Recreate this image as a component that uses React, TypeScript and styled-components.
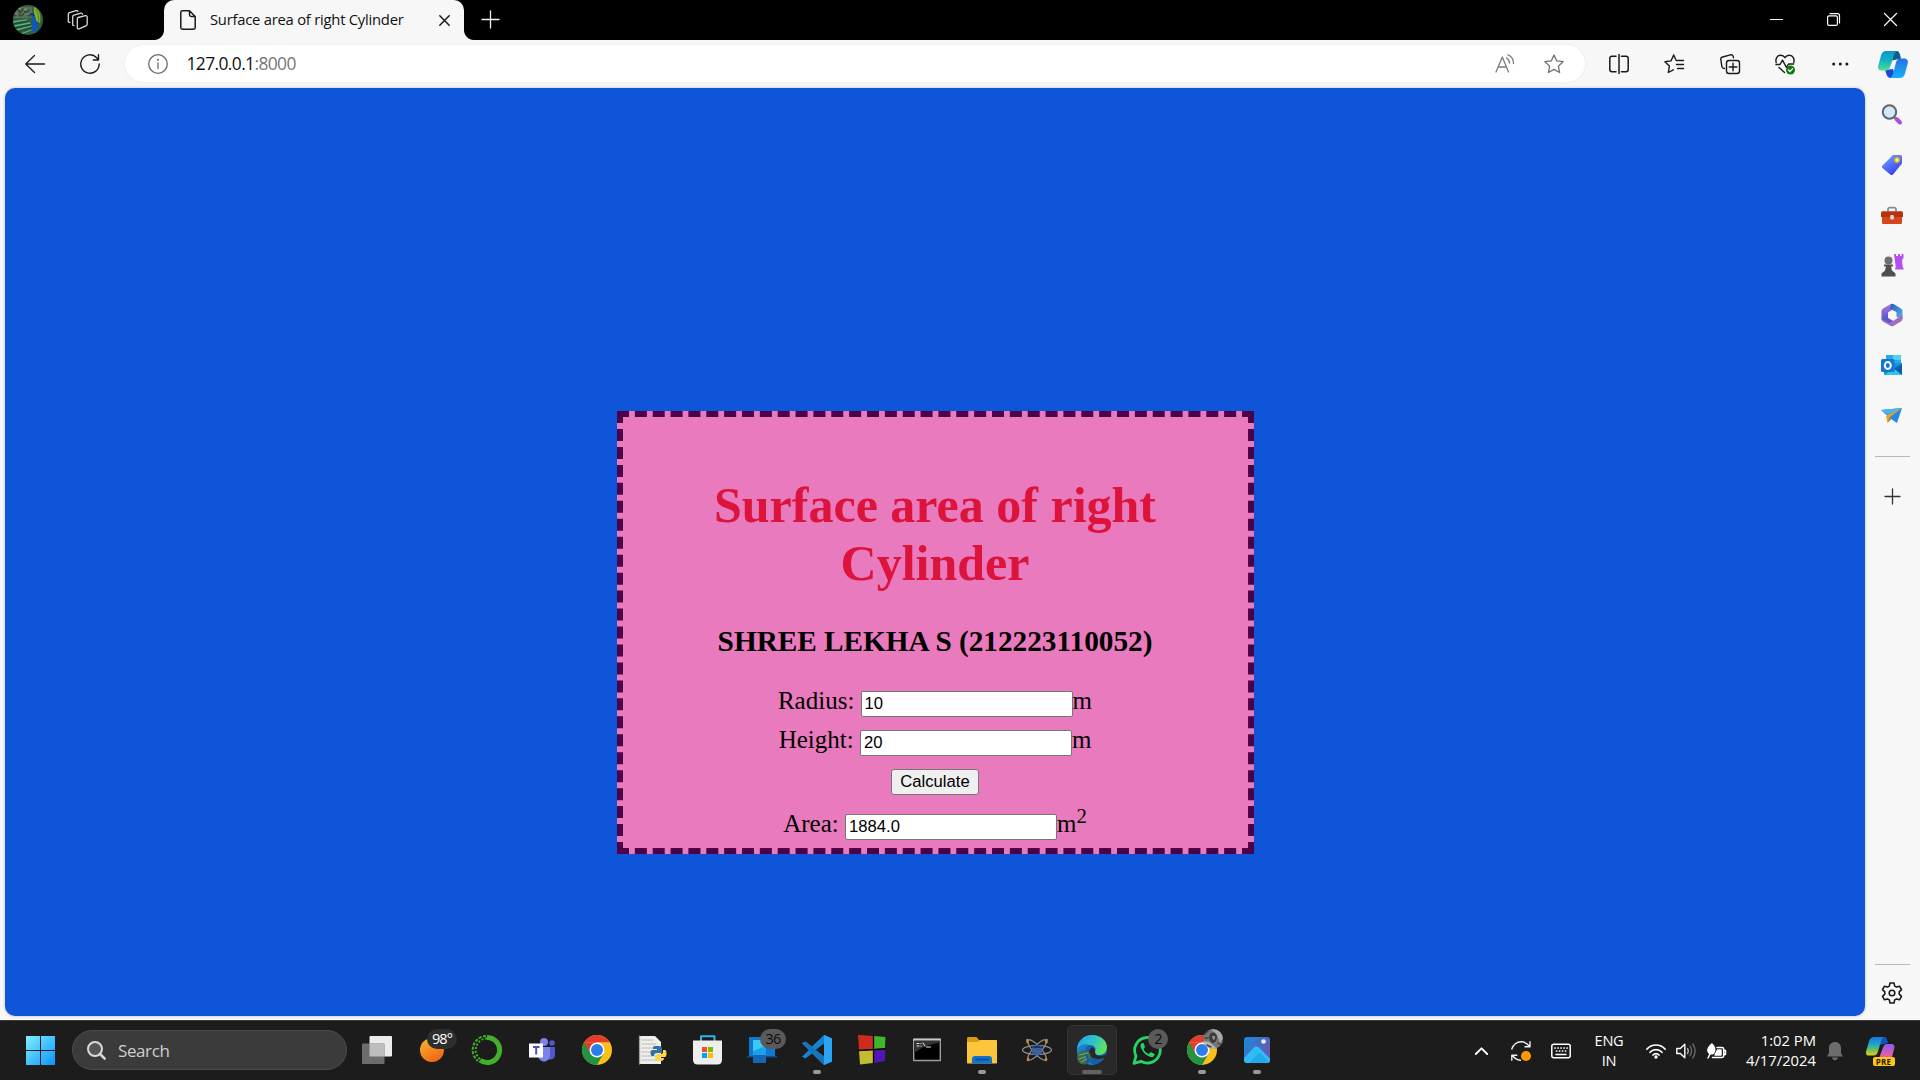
import React from 'react';
import styled, { createGlobalStyle } from 'styled-components';

const UI_FONT = '"Open Sans", "Noto Sans", sans-serif';

const GlobalStyle = createGlobalStyle`
  * { box-sizing: border-box; }
  html, body { margin: 0; padding: 0; overflow: hidden; background: #f7f7f7; }
  svg { display: block; flex: none; overflow: visible; }
`;

/* ---------- shell ---------- */

const Screen = styled.div`
  width: 1920px;
  height: 1080px;
  display: flex;
  flex-direction: column;
  overflow: hidden;
  background: #f7f7f7;
  font-family: ${UI_FONT};
`;

const Cell = styled.div<{ $w: number; $h?: number }>`
  width: ${(p) => p.$w}px;
  height: ${(p) => (p.$h ? `${p.$h}px` : '100%')};
  flex: none;
  display: flex;
  align-items: center;
  justify-content: center;
`;

/* ---------- title bar ---------- */

const TitleBar = styled.div`
  height: 40px;
  flex: none;
  display: flex;
  background: #000;
`;

const TitleLeft = styled.div`
  width: 164px;
  display: flex;
  align-items: center;
`;

const Tab = styled.div`
  position: relative;
  width: 300px;
  height: 40px;
  padding: 0 14px 0 16px;
  display: flex;
  align-items: center;
  background: #f7f7f7;
  border-radius: 10px 10px 0 0;
  &::before,
  &::after {
    content: '';
    position: absolute;
    bottom: 0;
    width: 10px;
    height: 10px;
  }
  &::before {
    left: -10px;
    background: radial-gradient(circle at 0 0, #000 9.5px, #f7f7f7 10.5px);
  }
  &::after {
    right: -10px;
    background: radial-gradient(circle at 100% 0, #000 9.5px, #f7f7f7 10.5px);
  }
`;

const TabTitle = styled.span`
  flex: 1;
  margin-left: 14px;
  padding-bottom: 2px;
  font-size: 14.8px;
  letter-spacing: -0.24px;
  line-height: 20px;
  color: #111;
  white-space: nowrap;
`;

const WindowButtons = styled.div`
  margin-left: auto;
  padding-right: 1px;
  padding-bottom: 1px;
  display: flex;
`;

/* ---------- toolbar ---------- */

const Toolbar = styled.div`
  height: 48px;
  flex: none;
  display: flex;
  padding-left: 7px;
  background: #f7f7f7;
`;

const AddressBar = styled.div`
  width: 1460px;
  height: 37px;
  margin: 5px 6px 0 8px;
  display: flex;
  align-items: center;
  background: #fff;
  border-radius: 19px;
  box-shadow: 0 0 3px rgba(0, 0, 0, 0.07);
`;

const Url = styled.span`
  flex: 1;
  margin-left: -4.5px;
  padding-bottom: 1px;
  font-size: 17.4px;
  letter-spacing: -0.6px;
  color: #111;
  white-space: nowrap;
  span { color: #767676; }
`;

/* ---------- page ---------- */

const Body = styled.div`
  height: 932px;
  flex: none;
  display: flex;
  padding-left: 5px;
`;

const Page = styled.main`
  width: 1860px;
  height: 928px;
  border-radius: 10px;
  background: #0f55d9;
  box-shadow: 0 0 3px rgba(0, 0, 0, 0.25);
`;

const Card = styled.section`
  width: 637px;
  height: 443px;
  margin: 323px 0 0 612px;
  padding: 25px 1px 0 0;
  border: 6px dashed #4b0049;
  background: #e97abd;
  font-family: "Liberation Serif", "Times New Roman", serif;
  font-size: 25px;
  text-align: center;
  color: #000;
`;

const Heading = styled.h1`
  margin: 34px 0 0;
  font-size: 50px;
  line-height: 58px;
  color: #dc143c;
`;

const Student = styled.h3`
  margin: 33px 0 23px;
  font-size: 29.25px;
  line-height: 33px;
`;

const Row = styled.div<{ $top?: number }>`
  height: 39px;
  margin-top: ${(p) => p.$top ?? 0}px;
  line-height: 39px;
  white-space: nowrap;
`;

const Field = styled.input`
  width: 212px;
  height: 26px;
  padding: 1px 3px;
  border: 1px solid #767676;
  border-radius: 2px;
  background: #fff;
  color: #000;
  font: 16.67px "Liberation Sans", Arial, sans-serif;
`;

const Submit = styled.button`
  width: 88px;
  height: 26px;
  padding: 0;
  border: 1px solid #767676;
  border-radius: 3px;
  background: #efefef;
  color: #000;
  font: 16.67px "Liberation Sans", Arial, sans-serif;
`;

const Power = styled.sup`
  font-size: 20.8px;
  line-height: 0;
  vertical-align: 9px;
`;

/* ---------- edge sidebar ---------- */

const Sidebar = styled.aside`
  width: 55px;
  height: 932px;
  padding-top: 2px;
  display: flex;
  flex-direction: column;
`;

const SideCell = styled(Cell)`
  padding-right: 1px;
`;

const Rule = styled.div`
  width: 35px;
  height: 1px;
  margin: 0 10px;
  background: #b9b9b9;
`;

const Push = styled.div`
  flex: 1;
`;

/* ---------- taskbar ---------- */

const Taskbar = styled.footer`
  height: 60px;
  flex: none;
  display: flex;
  align-items: stretch;
  background: #1c1c1c;
  border-top: 1px solid #3a3a3a;
  color: #fff;
`;

const StartButton = styled.div`
  width: 72px;
  padding-left: 26px;
  flex: none;
  display: flex;
  align-items: center;
`;

const SearchBox = styled.div`
  width: 275px;
  height: 40px;
  margin: 9px 2.5px 0 0;
  padding-left: 14px;
  flex: none;
  display: flex;
  align-items: center;
  gap: 12px;
  border: 1px solid #4c4c4c;
  border-radius: 20px;
  background: #3b3b3b;
  color: #cfcfcf;
  font-size: 17px;
  letter-spacing: -0.4px;
`;

const AppCell = styled.div<{ $active?: boolean }>`
  position: relative;
  width: 50px;
  height: 50px;
  margin: 4px 2.5px 0;
  flex: none;
  display: flex;
  align-items: center;
  justify-content: center;
  border-radius: 5px;
  background: ${(p) => (p.$active ? '#292929' : 'transparent')};
  border: 1px solid ${(p) => (p.$active ? '#333' : 'transparent')};
`;

const Indicator = styled.i<{ $w: number }>`
  position: absolute;
  bottom: 0;
  left: calc(50% - ${(p) => p.$w / 2}px);
  width: ${(p) => p.$w}px;
  height: 4px;
  border-radius: 2px;
  background: ${(p) => (p.$w > 10 ? '#626262' : '#9a9a9a')};
`;

const Badge = styled.span<{ $w: number; $dark?: boolean }>`
  position: absolute;
  top: 3px;
  left: ${(p) => (p.$dark ? 19 : 35 - p.$w / 2)}px;
  width: ${(p) => p.$w}px;
  height: 20px;
  border-radius: 10px;
  background: ${(p) => (p.$dark ? '#2e2e2e' : '#5a5a5a')};
  color: ${(p) => (p.$dark ? '#fff' : '#0c0c0c')};
  font-size: 14.5px;
  line-height: 20px;
  letter-spacing: -0.9px;
  text-align: center;
`;

const PhotoBadge = styled.span`
  position: absolute;
  top: 3px;
  left: 25px;
`;

const Tray = styled.div`
  margin-left: auto;
  padding-right: 12px;
  display: flex;
`;

const TrayText = styled.div<{ $w: number; $right?: boolean }>`
  width: ${(p) => p.$w}px;
  height: 40px;
  margin-top: 9px;
  font-size: ${(p) => (p.$right ? 14.8 : 14.6)}px;
  line-height: 20px;
  letter-spacing: ${(p) => (p.$right ? 0 : -0.3)}px;
  text-align: ${(p) => (p.$right ? 'right' : 'center')};
  white-space: nowrap;
`;

/* ---------- icon frame ---------- */

type IconProps = {
  w?: number;
  h?: number;
  c?: string;
  s?: number;
  children: React.ReactNode;
};

const Icon = ({ w = 20, h = w, c = 'none', s = 1.3, children }: IconProps) => (
  <svg
    width={w}
    height={h}
    viewBox={`0 0 ${w} ${h}`}
    fill="none"
    stroke={c}
    strokeWidth={s}
    strokeLinecap="round"
    strokeLinejoin="round"
  >
    {children}
  </svg>
);

const STAR = 'M10 1l2.700 5.900 6.400.800-4.700 4.400 1.200 6.400L10 15.400l-5.600 3.100 1.200-6.400L.9 7.700l6.400-.8z';

const Avatar = () => (
  <Icon w={30}>
    <defs>
      <clipPath id="avatarClip"><circle cx="15" cy="15" r="15" /></clipPath>
    </defs>
    <g clipPath="url(#avatarClip)">
      <path d="M0 0h30v30H0z" fill="#2f6141" />
      <path d="M0 2h19v11H0z" fill="#5d6f58" />
      <path d="M2 6l3-2 2 4 3-4 3 4 3-3M1 11l4-2 3 2 4-3 4 3" stroke="#2f4733" strokeWidth="1.500" />
      <path d="M5 3l2 1M11 5l2-1M3 9h2M12 9h3" stroke="#9aa48d" strokeWidth="1.200" />
      <path d="M0 17l14-2M1 21l16-3M3 25l15-4M8 29l10-4" stroke="#5fae7c" strokeWidth="1.300" />
      <path d="M0 19l15-3M2 23l15-3M5 27l13-4" stroke="#1d4a33" strokeWidth="1.300" />
      <path d="M21 2c5 1 7.500 8 6 16l-4-2c0-5-3-8-2-14z" fill="#86ab2f" />
      <path d="M23 4c2 3 3 7 2.500 12" stroke="#5a8a2b" strokeWidth="1.200" />
      <path d="M17 10c1-2 4-2 4.500 1 .5 4 3.500 5 3.500 10 0 4-2.500 7-5 6-3-2 .5-8-1.500-15z" fill="#1257b5" />
      <path d="M17 10c.5-1.500 3-1.500 3.500.5" stroke="#0b2f6b" strokeWidth="1.200" />
    </g>
  </Icon>
);

const EdgeCopilot = () => (
  <Icon w={30} h={27}>
    <defs>
      <linearGradient id="cpA" x1="0" y1="0" x2="0" y2="1">
        <stop offset="0" stopColor="#0f93cf" /><stop offset=".5" stopColor="#12b3bf" /><stop offset="1" stopColor="#54dc93" />
      </linearGradient>
      <linearGradient id="cpB" x1="0" y1="0" x2="0" y2="1">
        <stop offset="0" stopColor="#2a6fe0" /><stop offset="1" stopColor="#14b4fb" />
      </linearGradient>
    </defs>
    <path d="M15 0h3.500c2.500 0 3 2 3.600 4l1 3.500-9 2z" fill="#0c5f8c" />
    <path d="M7 19l8-1 3 9h-5c-3 0-4-2-4.600-4z" fill="#1e49d8" />
    <path d="M8 0h11c-2 1-3 3-3.700 6l-2.800 9c-.8 3-2.500 4.500-5 4.500H3.500C.8 19.500-.4 17.500.3 14.500L3 4.500C3.800 1.500 5.500 0 8 0z" fill="url(#cpA)" />
    <path d="M22.500 7.500H26c3 0 4.500 2 3.700 5L27 22.500c-.8 3-2.500 4.500-5 4.500H12c2-1 2.700-3 3.500-6l2.300-9c.8-3 2.200-4.500 4.700-4.500z" fill="url(#cpB)" />
  </Icon>
);

const Chrome = () => (
  <Icon w={30}>
    <circle cx="15" cy="15" r="15" fill="#fbc116" />
    <path d="M2 7.500A15 15 0 0 1 28 7.500H15z" fill="#e33b2e" />
    <path d="M2 7.500A15 15 0 0 0 15 30l6.500-11.300L15 15z" fill="#229342" />
    <path d="M2 7.500L8.500 18.700 15 7.500z" fill="#e33b2e" />
    <path d="M15 7.500h13L21.500 18.700z" fill="#fbc116" />
    <circle cx="15" cy="15" r="7.500" fill="#fff" />
    <circle cx="15" cy="15" r="6" fill="#2b7de9" />
  </Icon>
);

/* ---------- sidebar artwork ---------- */

const sideIcons: React.ReactNode[] = [
  <Icon w={22} key="search">
    <path d="M12.500 12.500l3 3" stroke="#6b6b6b" strokeWidth="2" />
    <path d="M15.500 15l3.500 3.500" stroke="#b24be0" strokeWidth="4" />
    <circle cx="8.500" cy="8" r="6.700" fill="#cfe9fb" stroke="#656565" strokeWidth="2" />
  </Icon>,
  <Icon w={22} key="tag">
    <defs><linearGradient id="tg" x1="0" y1="0" x2=".6" y2="1"><stop stopColor="#6db0ff" /><stop offset="1" stopColor="#3d3cf0" /></linearGradient></defs>
    <path d="M12 1h7c1.300 0 2 .7 2 2v6.500L12 20.500c-.8.8-2 .8-2.800 0L1.500 14c-.8-.8-.8-1.800 0-2.600z" fill="url(#tg)" />
    <circle cx="16" cy="6" r="2.200" fill="#fff3b8" stroke="#e3b912" strokeWidth="1.500" />
  </Icon>,
  <Icon w={22} key="toolbox">
    <path d="M7 7V5.500C7 4 8 3.700 9 3.700h4c1 0 2 .3 2 1.800V7" stroke="#8b8b8b" strokeWidth="1.700" />
    <path d="M1 12h20v6.500c0 1-.6 1.500-1.500 1.500h-17c-.9 0-1.500-.5-1.500-1.500z" fill="#d4461c" />
    <path d="M0 9c0-1 .6-1.700 1.500-1.700h19c.9 0 1.500.7 1.500 1.700v4H0z" fill="#b5340f" />
    <rect x="9.300" y="11" width="3.600" height="4.500" rx="1" fill="#d8d8d8" />
  </Icon>,
  <Icon w={22} key="games">
    <path d="M13 0h2v2h2V0h2v2h1.500V0h2v4l-1.500 2 .7 7 1.300 2.500h-9l.7-3z" fill="#b350ef" />
    <circle cx="7.500" cy="6.500" r="4" fill="#6f6f6f" />
    <path d="M3 10.500h9v2H10l1 4 3.500 3v3H.5v-3l3.500-3 1-4H3z" fill="#4f4f4f" />
  </Icon>,
  <Icon w={22} key="m365">
    <defs>
      <linearGradient id="ma" x1="0" y1="0" x2="0" y2="1"><stop stopColor="#a774dc" /><stop offset="1" stopColor="#5b58c8" /></linearGradient>
      <linearGradient id="mb" x1="0" y1="0" x2="1" y2="1"><stop stopColor="#2b55b8" /><stop offset="1" stopColor="#54b7ef" /></linearGradient>
    </defs>
    <path d="M10 0L2.500 4.300C1 5.200.5 6 .5 7.700v7.600l6.500 2V9l5-4V.5C11.500 0 10.800-.3 10 0z" fill="url(#ma)" />
    <path d="M10 0c1-.4 2-.2 3 .3l6.500 4c1.300.8 2 1.700 2 3.200V15l-6-2V8L9 5z" fill="url(#mb)" />
    <path d="M.5 15c0 1.400.6 2 1.800 2.700l7 4c1.200.7 2.200.7 3.400 0l6.800-4c1.400-.8 2-1.700 2-3.200l-.2-3.500L12 17l-5-3z" fill="#a06cc4" />
    <path d="M.5 15L7 9v5l5 3-4 2z" fill="#605ad0" />
    <path d="M11 6.500l4 2v4.700l-4 2.500-4-2.500V8.500z" fill="#f7f7f7" />
  </Icon>,
  <Icon w={22} key="outlook">
    <path d="M5 1h15v8H5z" fill="#28a8ea" /><path d="M12 1h8v5h-8z" fill="#50d0f5" />
    <path d="M3 9h18v12H4.500C3.500 21 3 20.500 3 19.500z" fill="#1490df" />
    <path d="M21 10v11l-9-6z" fill="#0a5ea8" /><path d="M4 21l8-7 9 7z" fill="#37c3ee" />
    <rect x="0" y="5" width="13.500" height="13" rx="1.500" fill="#0f78d4" />
    <ellipse cx="6.800" cy="11.500" rx="3" ry="3.400" stroke="#fff" strokeWidth="2" />
  </Icon>,
  <Icon w={22} key="drop">
    <path d="M0 6L21 4l-5 15-6-4z" fill="#2687e8" />
    <path d="M0 6L21 4 7 11z" fill="#46b5f4" />
    <path d="M21 4L5 12l1.500 7L9 13z" fill="#f0a21b" />
    <path d="M6.500 19l3.500-4-1.500-1.500z" fill="#9a6a19" />
  </Icon>,
];

/* ---------- taskbar artwork ---------- */

const TaskView = () => (
  <Icon w={30} h={28}>
    <rect x="7.500" y="0" width="22.500" height="20.500" rx="1" fill="#ececec" />
    <rect x="0" y="7.500" width="22.500" height="20.500" rx="1" fill="#6c6c6c" />
    <path d="M7.500 7.500h15v13h-15z" fill="#bdbdbd" />
  </Icon>
);

const Weather = () => (
  <Icon w={24}>
    <defs><linearGradient id="sun" x1="0" y1="0" x2=".7" y2="1"><stop stopColor="#f6b62e" /><stop offset="1" stopColor="#f26414" /></linearGradient></defs>
    <circle cx="12" cy="12" r="12" fill="url(#sun)" />
  </Icon>
);

const Anaconda = () => (
  <Icon w={30}>
    <path d="M15 2.500a12.500 12.500 0 1 1-7 22.800" stroke="#43b02a" strokeWidth="5" strokeLinecap="butt" />
    <path d="M15 3.500A11.500 11.500 0 0 0 8 24" stroke="#43b02a" strokeWidth="2" strokeLinecap="butt" strokeDasharray="2 1.700" />
    <path d="M14 1A14 14 0 0 0 6 26" stroke="#43b02a" strokeWidth="2" strokeLinecap="butt" strokeDasharray="3 1.500" />
  </Icon>
);

const Teams = () => (
  <Icon w={27} h={24}>
    <circle cx="15" cy="4" r="4" fill="#7b83eb" /><circle cx="23" cy="5" r="2.800" fill="#5059c9" />
    <path d="M17 9h9v8c0 3-2 4.500-5 4.500h-4z" fill="#5059c9" />
    <path d="M9 9h12v8c0 4-3 6.500-6 6.500S9 21 9 17z" fill="#7b83eb" />
    <rect x="0" y="5.500" width="14" height="14" fill="#fff" />
    <path d="M4 9h6.500M7.200 9v7.500" stroke="#4b53bc" strokeWidth="2" strokeLinecap="butt" />
  </Icon>
);

const PythonDoc = () => (
  <Icon w={29} h={30}>
    <path d="M1 1h16l6 6v22H1z" fill="#eeeeea" />
    <path d="M4 5h12M4 9h15M4 13h13M4 17h12M4 21h13M4 25h14" stroke="#b6b6b2" strokeWidth="1" strokeDasharray="2 1" />
    <path d="M1.500 1v28" stroke="#888" strokeWidth="1.500" strokeDasharray="1 2" />
    <path d="M17 11h4c2 0 3 1 3 3v4h-5c-2 0-3 1-3 3h-2c-2 0-2-6 0-6h5v-1h-4c0-2 0-3 2-3z" fill="#33709f" />
    <path d="M25 15h2c2 0 2 7 0 7h-5v1h4c0 2-1 3-3 3h-3c-2 0-3-1-3-3s1-4 3-4h3c2 0 2-2 2-4z" fill="#ffd445" />
  </Icon>
);

const Store = () => (
  <Icon w={29} h={30}>
    <path d="M8 6V1.200h13.500V6" stroke="#29b5f0" strokeWidth="2" />
    <path d="M0 5.500h29V25c0 3-2 4.500-4.500 4.500h-20C2 29.500 0 28 0 25z" fill="#eeeeee" />
    <path d="M9 12h5v5H9z" fill="#f25022" /><path d="M15 12h5v5h-5z" fill="#7fba00" />
    <path d="M9 18h5v5H9z" fill="#00a4ef" /><path d="M15 18h5v5h-5z" fill="#ffb900" />
  </Icon>
);

const PhoneLink = () => (
  <Icon w={30} h={28}>
    <path d="M2 1h26v19H2z" fill="#0f78d0" /><path d="M0 20h30v1.500H0z" fill="#0a4f8f" />
    <path d="M6 4h13v22H6z" fill="#1f9fe6" /><path d="M6 19h13v8H6z" fill="#1567b2" />
    <path d="M6 4h13v6l-13 5z" fill="#39c8f8" />
  </Icon>
);

const VSCode = () => (
  <Icon w={30}>
    <path d="M22 0l8 3.500v23L22 30 10 18.500l-6.500 5L0 21.800l7-6.800-7-6.800 3.500-1.700 6.500 5z" fill="#1583cf" />
    <path d="M22 0l8 3.500v23L22 30z" fill="#29a5f2" />
    <path d="M22 8.500L13.500 15l8.500 6.500z" fill="#1c1c1c" />
    <path d="M0 8.200l3.500-1.700L22 21.500V30z" fill="#1a72ba" />
  </Icon>
);

const Blocks = () => (
  <Icon w={28} h={30}>
    <path d="M0 0l15 1v13L1 15z" fill="#cf2a1e" /><path d="M16 1l11.500 1-.5 11-11 1z" fill="#3fb52c" />
    <path d="M1 16l14-1v13L2 29.500z" fill="#c1bd2d" /><path d="M16 15l11-1v12l-11 2z" fill="#5216b6" />
    <path d="M15.500 0v29M0 15.500l27-1.500" stroke="#0b0b0b" />
  </Icon>
);

const Cmd = () => (
  <Icon w={28} h={24}>
    <path d="M.7 1.500h26.600v21H.7z" fill="#000" stroke="#9d9da5" strokeWidth="1.400" />
    <path d="M1 3h26v2C14 6 7 11 1 15z" fill="#333" /><path d="M1 1.500h26" stroke="#c7c7cd" strokeWidth="2" />
    <path d="M4 5.500h2M4 8h2M8 5.500v.2M8 8v.2M10 5l2 3M13.500 9h4" stroke="#eee" strokeWidth="1" />
  </Icon>
);

const Explorer = () => (
  <Icon w={30} h={27}>
    <path d="M0 1.500C0 .6.6 0 1.500 0h8l3 3.500H28V15H0z" fill="#d99a0b" />
    <path d="M0 5h10l3-2h16c.7 0 1 .3 1 1v21.500c0 .7-.3 1-1 1H1c-.7 0-1-.3-1-1z" fill="#fbc63b" />
    <path d="M5 26.500V22c0-2 1-3 3-3h14c2 0 3 1 3 3v4.500z" fill="#1273c8" />
    <path d="M9 22.500h12" stroke="#0a4a8f" strokeWidth="1.500" />
  </Icon>
);

const Atom = () => (
  <Icon w={30} h={24}>
    <g stroke="#929292" strokeWidth="1.200">
      <ellipse cx="15" cy="12" rx="14.500" ry="4.500" />
      <ellipse cx="15" cy="12" rx="13" ry="4" transform="rotate(48 15 12)" />
      <ellipse cx="15" cy="12" rx="13" ry="4" transform="rotate(-48 15 12)" />
    </g>
    <circle cx="15" cy="12" r="5.500" fill="#3c5f9f" />
    <path d="M10 10c2-3 8-3 10 0" fill="#22324f" />
    <path d="M5.500 2v2M24.500 2v2M6 21v1M24 21v1" stroke="#c68d3a" strokeWidth="2.500" />
  </Icon>
);

const Edge = () => (
  <Icon w={30}>
    <defs>
      <linearGradient id="ed" x1="0" y1="0" x2="1" y2=".3"><stop stopColor="#1fa2e8" /><stop offset=".6" stopColor="#2fc3c8" /><stop offset="1" stopColor="#5fe060" /></linearGradient>
    </defs>
    <circle cx="15" cy="15" r="15" fill="#1260ad" />
    <path d="M0 15C0 6 7 0 15 0c9 0 15 6 15 12 0 5-3.500 8-8 8-4 0-5-2-4-3.500 2-3-1-6.500-5-6.500C7 10 2 13 0 18z" fill="url(#ed)" />
    <path d="M0 15c2-5 8-7 12-5-5 2-5 10-2 14 2 3 5 5 8 5.700C8 31 0 24 0 15z" fill="#1b7fd0" />
    <path d="M18 17c0 2 2 4 5 4 3 0 5-1 6.500-2l2 1-2.500 4c-2-2-4 0-7 0-5 0-10-2-10-7 0-2 2-5 4-4.500 2 1 2 3.500 2 4.500z" fill="#292929" />
    <circle cx="7" cy="22.500" r="7" fill="#3d6b45" />
    <path d="M2 20l9-2M2 24l9-3M4 27l8-4" stroke="#79a882" strokeWidth="1" />
    <path d="M9 20c2 2 3 5 1 8" stroke="#1257b5" strokeWidth="2" />
  </Icon>
);

const WhatsApp = () => (
  <Icon w={30}>
    <path d="M2 28.300l2-7.300A12.800 12.800 0 1 1 9 26.300z" stroke="#25d366" strokeWidth="2.800" />
    <path d="M10 8c-1.500 1-2 3-1 5 2 4.500 5 7.500 9.500 9 2.500.6 4-.8 4.200-3l-4-2-2 2c-2.500-1-4.300-3-5.200-5l1.600-2-1.600-4z" fill="#25d366" />
  </Icon>
);

const Photos = () => (
  <Icon w={26}>
    <defs><linearGradient id="ph" x1="0" y1="0" x2="1" y2=".6"><stop stopColor="#158bdd" /><stop offset="1" stopColor="#6a58ad" /></linearGradient></defs>
    <rect width="26" height="26" rx="3" fill="url(#ph)" />
    <path d="M0 21l10-10.500c1.500-1.500 3.500-1.500 5 0L26 21.500V23c0 2-1 3-3 3H3c-2 0-3-1-3-3z" fill="#2ebcf5" />
    <path d="M14 17c1-1 2-1 3 0l8 8-2 1H5z" fill="#1593df" opacity=".45" />
    <circle cx="19.500" cy="4.500" r="2.300" fill="#e8f0ff" />
  </Icon>
);

const ProfilePhoto = () => (
  <PhotoBadge>
    <Icon w={20}>
      <defs><clipPath id="pp"><circle cx="10" cy="10" r="10" /></clipPath></defs>
      <g clipPath="url(#pp)">
        <path d="M0 0h20v20H0z" fill="#777" />
        <path d="M8 0l12 1v8l-3 5-3-8z" fill="#a8a8a8" />
        <path d="M0 12l6 1 5 4 3 3H0z" fill="#b8b8b8" />
        <path d="M7 5c3-3 7-1 7 3 0 3-2 6-4 6-3 0-5-6-3-9z" fill="#3c3c3c" />
        <path d="M9 7h3v3l-2 1z" fill="#8f8f8f" />
        <path d="M2 5l3-3M2 9h3M15 14l3 2M4 16l4 2" stroke="#444" strokeWidth="1.500" />
      </g>
    </Icon>
  </PhotoBadge>
);

type AppEntry = { name: string; art: React.ReactNode; run?: number; active?: boolean; extra?: React.ReactNode };

const apps: AppEntry[] = [
  { name: 'task-view', art: <TaskView /> },
  { name: 'weather', art: <Weather />, extra: <Badge $w={30} $dark>98°</Badge> },
  { name: 'anaconda', art: <Anaconda /> },
  { name: 'teams', art: <Teams /> },
  { name: 'chrome', art: <Chrome /> },
  { name: 'python', art: <PythonDoc /> },
  { name: 'store', art: <Store /> },
  { name: 'phone', art: <PhoneLink />, extra: <Badge $w={26}>36</Badge> },
  { name: 'code', art: <VSCode />, run: 8 },
  { name: 'blocks', art: <Blocks /> },
  { name: 'cmd', art: <Cmd /> },
  { name: 'explorer', art: <Explorer />, run: 8 },
  { name: 'atom', art: <Atom /> },
  { name: 'edge', art: <Edge />, run: 20, active: true },
  { name: 'whatsapp', art: <WhatsApp />, extra: <Badge $w={20}>2</Badge> },
  { name: 'chrome-profile', art: <Chrome />, run: 8, extra: <ProfilePhoto /> },
  { name: 'photos', art: <Photos />, run: 8 },
];

const PreLabel = styled.span`
  position: absolute;
  left: 7px;
  bottom: 0;
  width: 22px;
  height: 9px;
  border-radius: 2px;
  background: #ffc90e;
  color: #1c1c1c;
  font-size: 8px;
  font-weight: 700;
  line-height: 9px;
  letter-spacing: 0.2px;
  text-align: center;
`;

const PreWrap = styled.div`
  position: relative;
  width: 29px;
  height: 29px;
  margin-right: 2px;
  margin-top: 2px;
`;

const K = '#1a1a1a';

export default function App() {
  return (
    <Screen>
      <GlobalStyle />
      <TitleBar>
        <TitleLeft>
          <Cell $w={56}><Avatar /></Cell>
          <Cell $w={43}>
            <Icon w={21} c="#d8d8d8" s={1.3}>
              <path d="M11 7.500l7.500-1.800c1-.2 1.700.3 1.700 1.300v7c0 .9-.5 1.500-1.300 1.800L12 18.800c-1 .3-1.700-.2-1.700-1.200V9c0-.8.2-1.300.7-1.500z" />
              <path d="M7 15.500l-1.300-.4V6.800c0-.8.4-1.300 1.200-1.600l7-2c.9-.2 1.500.2 1.700 1" />
              <path d="M3 12.500l-1.700-.6V4.200c0-.8.4-1.300 1.200-1.600l6.500-2c.9-.2 1.600.1 1.900.9" />
            </Icon>
          </Cell>
        </TitleLeft>
        <Tab>
          <Icon w={16} h={20} c={K} s={1.5}>
            <path d="M9.500.8H2.500C1.500.8.8 1.500.8 2.500v15c0 1 .7 1.700 1.700 1.700h11c1 0 1.700-.7 1.700-1.700V6.500zM9.500.8v4c0 1 .7 1.700 1.700 1.700h4" />
          </Icon>
          <TabTitle>Surface area of right Cylinder</TabTitle>
          <Icon w={11} c={K} s={1.5}><path d="M.8.8l9.400 9.400M10.200.8L.8 10.200" /></Icon>
        </Tab>
        <Cell $w={53} $h={39}><Icon w={17} c="#f2f2f2" s={1.3}><path d="M8.500 0v17M0 8.500h17" /></Icon></Cell>
        <WindowButtons>
          <Cell $w={57}><Icon w={13} c="#fff" s={1.2}><path d="M.5 6.500h12" /></Icon></Cell>
          <Cell $w={57}>
            <Icon w={13} c="#fff" s={1.2}><rect x=".6" y="2.800" width="9.800" height="9.600" rx="1.500" /><path d="M3 .6h7.500c1.300 0 2 .7 2 2V10" /></Icon>
          </Cell>
          <Cell $w={57}><Icon w={13} c="#fff" s={1.2}><path d="M.5.5l12 12M12.500.5l-12 12" /></Icon></Cell>
        </WindowButtons>
      </TitleBar>

      <Toolbar>
        <Cell $w={55} $h={47}><Icon c={K}><path d="M19.500 10H.8M9.500 1.500L.8 10l8.700 8.500" /></Icon></Cell>
        <Cell $w={55}><Icon c={K} s={1.4}><path d="M19.200 10a9.200 9.200 0 1 1-2.500-6.300L18.500 6M18.500.8V6h-5.200" /></Icon></Cell>
        <AddressBar>
          <Cell $w={66}>
            <Icon c="#6b6b6b"><circle cx="10" cy="10" r="9.300" /><path d="M10 9v5.500" /><path d="M10 5.600v.3" strokeWidth="1.900" /></Icon>
          </Cell>
          <Url>127.0.0.1<span>:8000</span></Url>
          <Cell $w={37}>
            <Icon c="#7b7b7b"><path d="M1 18L7.300 3 13.500 18M3.200 13h8.200M11.500 4c2 1 3 3 3 5M13 .8c3.500 1.500 5.500 5 5.500 8.700" /></Icon>
          </Cell>
          <Cell $w={62}><Icon c="#6f6f6f"><path d={STAR} /></Icon></Cell>
        </AddressBar>
        <Cell $w={55}>
          <Icon c={K} s={1.5}><path d="M7 2.200H3C1.800 2.200.8 3.200.8 4.400v11.200c0 1.200 1 2.200 2.200 2.200h4M12.500 2.200H17c1.200 0 2.200 1 2.200 2.200v11.200c0 1.200-1 2.200-2.200 2.200h-4.500M10 .5v19" /></Icon>
        </Cell>
        <Cell $w={56}>
          <Icon c={K} s={1.4}><path d="M12.500 6.500h-.3L9.700 1 7 6.900.9 7.700l4.500 4.400-1.100 6.400 5-2.700M13.500 6.500h6M12.500 10.500h7M13.500 14.500h6" /></Icon>
        </Cell>
        <Cell $w={55}>
          <Icon c={K} s={1.4}>
            <rect x="6.500" y="6.500" width="13" height="13" rx="2.500" /><path d="M13 9.200v7.600M9.200 13h7.600" />
            <path d="M4.500 14.500c-1.500 0-2.300-.6-2.600-1.800L.8 5.500c-.2-1.300.4-2.200 1.700-2.500L10.500.8c1.300-.3 2.300.3 2.700 1.600l.3 1.300" />
          </Icon>
        </Cell>
        <Cell $w={55}>
          <Icon c={K} s={1.4}>
            <path d="M1.200 8.500C.2 5 2 1.200 5.600 1.200c2.200 0 3.500 1 4.400 2.500.9-1.500 2.200-2.500 4.400-2.500 3.600 0 5.400 3.800 4.400 7.300M1 10.500h4l2.500-4.300 4 7.300 2-3.500h5M4 13.500l5.500 5" />
            <circle cx="15.500" cy="16" r="4.500" fill="#12790f" stroke="none" /><path d="M13.500 16l1.500 1.500 2.600-2.800" stroke="#fff" strokeWidth="1.200" />
          </Icon>
        </Cell>
        <Cell $w={55}>
          <Icon w={18}><circle cx="2.700" cy="9" r="1.500" fill={K} /><circle cx="9.300" cy="9" r="1.500" fill={K} /><circle cx="15.900" cy="9" r="1.500" fill={K} /></Icon>
        </Cell>
        <Cell $w={52}><EdgeCopilot /></Cell>
      </Toolbar>

      <Body>
        <Page>
          <Card>
            <Heading>Surface area of right Cylinder</Heading>
            <Student>SHREE LEKHA S (212223110052)</Student>
            <Row>Radius: <Field defaultValue="10" />m</Row>
            <Row>Height: <Field defaultValue="20" />m</Row>
            <Row><Submit>Calculate</Submit></Row>
            <Row $top={6}>Area: <Field defaultValue="1884.0" />m<Power>2</Power></Row>
          </Card>
        </Page>
        <Sidebar>
          {sideIcons.map((icon, i) => <SideCell $w={55} $h={50} key={i}>{icon}</SideCell>)}
          <Cell $w={55} $h={16} />
          <Rule />
          <SideCell $w={55} $h={78}><Icon w={15} c="#333"><path d="M7.500 0v15M0 7.500h15" /></Icon></SideCell>
          <Push />
          <Rule />
          <SideCell $w={55} $h={55}>
            <Icon w={22} c={K} s={1.6}>
              <circle cx="11" cy="11" r="2.800" />
              <path d="M9 1h4l.7 3.100 1.800 1 3-.9 2 3.500-2.300 2.200v2.200l2.300 2.200-2 3.500-3-.9-1.800 1L13 21H9l-.7-3.100-1.800-1-3 .9-2-3.500 2.300-2.200V9.900L1.500 7.700l2-3.500 3 .9 1.800-1z" />
            </Icon>
          </SideCell>
        </Sidebar>
      </Body>

      <Taskbar>
        <StartButton>
          <Icon w={29}>
            <defs><linearGradient id="win" x1="0" y1="0" x2="29" y2="29" gradientUnits="userSpaceOnUse"><stop stopColor="#7ff1ff" /><stop offset="1" stopColor="#0a93fb" /></linearGradient></defs>
            <path d="M0 0h14v14H0zM15 0h14v14H15zM0 15h14v14H0zM15 15h14v14H15z" fill="url(#win)" />
          </Icon>
        </StartButton>
        <SearchBox>
          <Icon w={19} c="#d6dade" s={2}><circle cx="8" cy="8" r="7" fill="#565656" /><path d="M13 13l4.700 4.700" strokeWidth="2.600" /></Icon>
          Search
        </SearchBox>
        {apps.map((a) => (
          <AppCell key={a.name} $active={a.active}>
            {a.art}
            {a.extra}
            {a.run ? <Indicator $w={a.run} /> : null}
          </AppCell>
        ))}
        <Tray>
          <Cell $w={30}><Icon w={13} h={8} c="#fff" s={1.9}><path d="M.8 7l5.700-5.700L12.200 7" /></Icon></Cell>
          <Cell $w={50}>
            <Icon c="#f0f0f0" s={1.4}>
              <path d="M.8 8C2 3.500 6 .8 10 .8c3.500 0 6.500 1.700 8.500 4.700M19 .8v5h-5M.8 19.300v-5h5M1.500 14.500c2 3 4.500 4.500 8 4.700" />
              <circle cx="15" cy="15" r="5" fill="#ff9800" stroke="none" />
            </Icon>
          </Cell>
          <Cell $w={30}>
            <Icon w={20} h={16} c="#fff" s={1.5}>
              <rect x=".8" y="1.300" width="18.400" height="13.400" rx="2" />
              <path d="M5 11.500h10" /><path d="M4 5h.2M7 5h.2M10 5h.2M13 5h.2M16 5h.2M5.500 8h.2M8.500 8h.2M11.500 8h.2M14.500 8h.2" strokeWidth="1.700" />
            </Icon>
          </Cell>
          <TrayText $w={66}>ENG<br />IN</TrayText>
          <Cell $w={28}>
            <Icon w={20} h={16} c="#fff" s={1.7}>
              <path d="M.8 6.200c5-5.600 13.400-5.600 18.400 0M4 9.300c3.300-3.600 8.700-3.600 12 0M7 12c1.700-1.900 4.300-1.900 6 0" /><circle cx="10" cy="14" r="1.700" fill="#fff" stroke="none" />
            </Icon>
          </Cell>
          <Cell $w={32}>
            <Icon w={20} h={16} c="#fff" s={1.4}>
              <path d="M.8 5.500h3.500L8.800 1.200v13.600L4.300 10.500H.8z" />
              <path d="M11.500 5.500c1 1.500 1 3.500 0 5" stroke="#aaa" /><path d="M14 3.200c2 3 2 6.500 0 9.500M16.800 1c3 4.500 3 9.500 0 14" stroke="#666" />
            </Icon>
          </Cell>
          <Cell $w={28}>
            <Icon w={20} h={18} c="#fff" s={1.5}>
              <path d="M11 5.500h5c1 0 1.700.7 1.700 1.700v6.600c0 1-.7 1.700-1.700 1.700H6.500M18.500 8.500h1v4h-1" />
              <path d="M11.500 8h3.500v5h-6z" fill="#fff" />
              <path d="M6 1c3 3 4.500 6 2.500 10-1 1.700-4 2-5.500 1C-.5 9 1 5 6 1z" fill="#fff" stroke="none" /><path d="M2 16l3-6" />
            </Icon>
          </Cell>
          <TrayText $w={86} $right>1:02 PM<br />4/17/2024</TrayText>
          <Cell $w={38}>
            <Icon w={16} h={20}><path d="M8 1c3.600 0 6 2.600 6 6v5l2 3.500H0L2 12V7c0-3.400 2.400-6 6-6zM5 16.500h6c-.3 1.800-1.500 2.700-3 2.700s-2.700-.9-3-2.700z" fill="#6c6c6c" /></Icon>
          </Cell>
          <Cell $w={54}>
            <PreWrap>
              <Icon w={29} h={26}>
                <defs>
                  <linearGradient id="pa" x1="0" y1="0" x2="0" y2="1"><stop stopColor="#1d74e0" /><stop offset=".4" stopColor="#18a9c9" /><stop offset=".75" stopColor="#7fc24c" /><stop offset="1" stopColor="#f5c820" /></linearGradient>
                  <linearGradient id="pb" x1="0" y1="0" x2="0" y2="1"><stop stopColor="#8a5cf0" /><stop offset="1" stopColor="#f0609a" /></linearGradient>
                </defs>
                <path d="M14 0h4c2.500 0 3 2 4 6l-9 2z" fill="#1554c0" />
                <path d="M8 0h10c-2 1-3 3-3.500 6l-2.300 8c-.8 3-2.200 4.500-4.700 4.500H3c-3 0-3.500-2-2.700-5L3 4.500C3.800 1.500 5.500 0 8 0z" fill="url(#pa)" />
                <path d="M21 7h4c3 0 4 2 3.200 4.500L26 20H13.500L17 10.500C17.800 8 19 7 21 7z" fill="url(#pb)" />
              </Icon>
              <PreLabel>PRE</PreLabel>
            </PreWrap>
          </Cell>
        </Tray>
      </Taskbar>
    </Screen>
  );
}
